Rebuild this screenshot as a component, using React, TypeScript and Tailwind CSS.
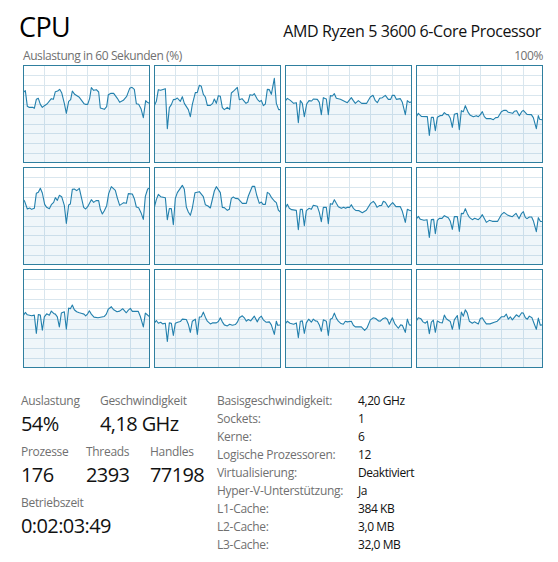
import React from 'react';

interface Stat {
  label: string;
  value: string;
  className?: string;
}

// Load curves, one per logical processor, in a 381 x 294 box
const cores = [
  '0,83 7,77 13,124 18,127 29,127 34,130 40,103 46,100 52,118 58,127 64,122 72,117 85,101 91,103 97,80 104,78 110,73 116,83 124,115 130,145 137,109 143,104 148,78 155,88 169,97 183,116 187,118 194,118 200,100 205,68 212,76 220,74 227,81 232,129 244,133 251,125 256,89 264,85 272,85 283,100 290,112 301,106 311,94 320,70 327,67 334,73 340,116 347,118 354,131 361,158 368,107 373,112 381,116',
  '0,124 7,109 13,74 20,76 34,71 40,191 46,128 52,119 58,104 64,103 70,99 79,109 85,95 91,115 103,134 109,155 115,118 124,83 130,82 136,61 142,64 148,88 154,96 160,121 169,121 176,115 181,102 187,115 193,92 199,94 205,128 211,134 220,127 227,133 232,84 241,76 250,67 256,104 264,101 276,115 282,111 288,89 295,91 301,86 310,103 317,110 322,106 328,122 334,117 340,73 346,74 352,88 361,40 367,115 374,134 381,134',
  '0,109 7,100 16,106 26,115 34,113 40,173 46,107 52,115 58,155 65,117 72,107 80,108 85,102 97,103 103,112 109,149 115,98 124,102 130,149 136,92 142,93 148,86 154,100 166,103 187,113 199,98 205,107 211,115 220,107 230,115 245,115 256,96 264,91 271,107 277,113 284,100 292,98 301,91 310,103 317,103 322,91 328,91 334,103 346,101 352,112 361,149 367,107 373,112 381,111',
  '0,156 7,145 16,154 34,155 40,211 46,157 52,157 58,197 64,157 72,152 79,151 85,143 92,149 97,149 103,160 109,187 115,148 124,145 130,194 136,137 142,140 148,122 157,143 163,151 172,155 181,152 187,155 193,149 199,140 205,155 211,161 225,161 232,164 239,158 246,157 256,140 264,136 271,136 277,142 290,145 295,139 302,137 310,152 317,140 322,136 333,148 346,149 352,158 361,191 367,152 371,163 381,165',
  '0,96 5,103 13,126 20,123 26,127 34,124 40,79 46,76 52,64 58,78 65,112 71,121 79,125 85,113 92,106 97,92 103,100 109,85 116,89 124,115 130,169 137,114 142,111 148,67 154,66 161,71 169,64 176,95 182,121 188,126 194,119 205,98 212,106 219,101 227,101 232,127 238,141 244,131 251,116 257,80 265,59 277,70 283,93 290,115 302,107 310,109 316,80 328,81 334,95 340,120 347,122 354,137 361,157 367,88 374,66 381,63',
  '0,125 7,98 13,82 20,89 34,92 40,158 46,125 52,125 58,173 64,94 70,77 85,55 91,67 97,120 103,135 109,145 115,123 123,77 136,74 148,89 154,113 162,117 169,123 181,72 187,59 199,77 205,121 211,122 220,130 226,127 232,94 238,90 244,94 252,95 265,109 277,109 283,87 295,58 302,58 308,84 316,109 322,105 327,112 334,112 340,76 346,80 352,91 361,102 367,107 373,129 381,137',
  '0,125 7,112 13,124 20,128 34,130 40,188 46,127 52,127 58,176 64,131 72,124 79,127 85,115 97,118 103,136 109,164 115,121 124,121 130,170 136,110 142,112 148,98 154,109 160,119 169,124 176,121 182,124 187,121 194,121 199,113 205,124 212,130 222,131 232,137 244,130 256,110 265,103 270,109 276,121 283,116 290,115 295,103 301,106 310,121 317,113 323,107 333,119 346,119 352,133 361,166 367,127 373,130 381,132',
  '0,157 7,148 13,157 24,160 33,158 40,211 46,158 53,157 58,200 64,160 70,154 78,154 85,146 91,149 97,152 103,163 109,187 115,149 124,149 130,193 136,139 142,140 148,125 154,140 160,151 169,158 176,154 187,158 193,152 199,143 211,166 220,160 229,163 245,163 256,143 264,136 276,145 289,149 300,139 309,155 316,140 322,134 328,151 333,155 340,150 347,150 352,161 361,194 367,152 373,163 381,164',
  '0,140 7,129 13,136 26,139 34,137 40,191 46,135 52,137 58,182 64,142 71,133 79,137 85,125 92,132 97,134 103,142 109,172 115,131 124,127 130,179 137,116 142,118 148,107 154,121 161,127 169,130 177,132 183,134 188,139 194,133 199,124 205,134 213,143 225,145 244,141 250,134 256,119 265,112 271,120 282,127 290,125 299,118 310,130 316,122 322,117 328,126 346,126 352,141 361,172 367,131 373,136 381,143',
  '0,162 7,153 13,161 20,158 26,163 34,161 40,215 46,160 52,161 58,197 64,161 71,158 79,156 85,149 97,150 103,164 109,188 115,155 124,149 130,194 136,143 142,142 148,128 154,143 160,155 169,163 175,160 187,160 193,156 199,145 205,157 211,166 220,169 227,164 235,167 244,165 250,158 256,145 265,139 271,145 277,155 283,150 290,154 301,140 310,157 316,145 322,140 328,151 336,158 346,157 352,166 361,194 367,155 371,167 381,166',
  '0,164 7,155 15,161 26,164 34,160 40,204 46,155 52,154 58,191 64,160 71,149 79,158 85,149 91,154 97,155 103,166 109,185 115,151 124,155 130,197 136,149 142,146 148,131 154,146 160,155 168,162 175,164 181,155 187,157 199,155 205,167 211,172 229,172 239,182 246,175 256,151 265,145 272,147 280,154 286,155 293,148 301,145 307,149 313,164 322,145 329,162 340,176 347,166 352,167 361,188 367,149 373,166 381,167',
  '0,155 7,145 15,148 21,157 28,161 34,155 40,192 46,158 52,152 58,188 64,154 72,159 79,160 85,137 91,148 97,152 103,156 109,179 115,151 124,138 130,179 136,128 142,140 148,121 154,131 160,155 169,161 175,157 187,163 193,147 199,145 205,155 211,163 222,163 235,158 244,155 256,142 264,142 271,134 277,149 283,142 289,151 301,136 309,142 317,130 322,131 328,145 334,149 340,140 348,145 354,161 361,179 367,146 373,167 381,165',
];

const columns = [21, 43, 64, 85, 107];
const rows = [10, 20, 30, 39, 49, 59, 68, 78, 88];

const details: Stat[] = [
  { label: 'Basisgeschwindigkeit:', value: '4,20 GHz' },
  { label: 'Sockets:', value: '1' },
  { label: 'Kerne:', value: '6' },
  { label: 'Logische Prozessoren:', value: '12' },
  { label: 'Virtualisierung:', value: 'Deaktiviert' },
  { label: 'Hyper-V-Unterstützung:', value: 'Ja' },
  { label: 'L1-Cache:', value: '384 KB' },
  { label: 'L2-Cache:', value: '3,0 MB' },
  { label: 'L3-Cache:', value: '32,0 MB' },
];

const CoreChart: React.FC<{ points: string }> = ({ points }) => (
  <div className="border border-[#2f7f9f] overflow-hidden bg-white">
    <svg viewBox="3 3 375 288" preserveAspectRatio="none" className="block w-full h-full">
      <g stroke="#d9e6ee" strokeWidth="3" shapeRendering="crispEdges">
        {columns.map((x) => (
          <line key={x} x1={x * 3 + 1.5} x2={x * 3 + 1.5} y1="0" y2="294" />
        ))}
        {rows.map((y) => (
          <line key={y} x1="0" x2="381" y1={y * 3 + 1.5} y2={y * 3 + 1.5} />
        ))}
      </g>
      <polygon points={`0,294 ${points} 381,294`} fill="#117dbb" fillOpacity="0.065" />
      <polyline points={points} fill="none" stroke="#2380ad" strokeWidth="3.3" strokeLinejoin="round" />
    </svg>
  </div>
);

const StatBlock: React.FC<Stat> = ({ label, value, className = '' }) => (
  <div className={`whitespace-nowrap ${className}`}>
    <div className="text-[12px] leading-[18px] tracking-[-0.3px] text-[#707070]">{label}</div>
    <div className="mb-[2px] text-[20px] leading-[28px] tracking-[-0.6px] text-[#111]">{value}</div>
  </div>
);

const App: React.FC = () => {
  return (
    <div className="w-[558px] h-[562px] overflow-hidden bg-white pl-[23px] pr-[15px] font-['Open_Sans','Noto_Sans',sans-serif]">
      {/* Header */}
      <div className="flex h-[47px] items-end justify-between whitespace-nowrap">
        <h1 className="-ml-1 text-[27px] leading-[40px] tracking-[-0.6px] text-black">CPU</h1>
        <span className="mr-[2px] pb-1 text-[16px] leading-[24px] tracking-[-0.38px] text-[#111]">
          AMD Ryzen 5 3600 6-Core Processor
        </span>
      </div>
      <div className="flex h-[18px] justify-between text-[12px] leading-[18px] tracking-[-0.42px] text-[#707070]">
        <span>Auslastung in 60 Sekunden (%)</span>
        <span>100%</span>
      </div>

      {/* Logical processors */}
      <div className="grid h-[303px] grid-cols-[repeat(4,127px)] grid-rows-[98px_98px_99px] gap-1">
        {cores.map((points, i) => (
          <CoreChart key={i} points={points} />
        ))}
      </div>

      {/* Stats */}
      <div className="-ml-[2px] mt-6 flex">
        <div className="w-[196px] space-y-[3px]">
          <div className="flex">
            <StatBlock label="Auslastung" value="54%" className="w-[79px]" />
            <StatBlock label="Geschwindigkeit" value="4,18 GHz" />
          </div>
          <div className="flex">
            <StatBlock label="Prozesse" value="176" className="w-[65px]" />
            <StatBlock label="Threads" value="2393" className="w-[64px]" />
            <StatBlock label="Handles" value="77198" />
          </div>
          <StatBlock label="Betriebszeit" value="0:02:03:49" />
        </div>
        <dl className="grid grid-cols-[141px_auto] content-start whitespace-nowrap text-[12px] leading-[18px] tracking-[-0.28px]">
          {details.map(({ label, value }) => (
            <React.Fragment key={label}>
              <dt className="text-[#707070]">{label}</dt>
              <dd className="text-[#111] tracking-[-0.42px]">{value}</dd>
            </React.Fragment>
          ))}
        </dl>
      </div>
    </div>
  );
};

export default App;
